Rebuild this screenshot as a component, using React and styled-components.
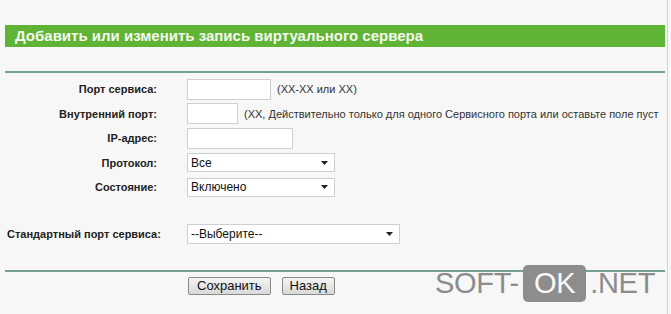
import React from 'react'
import styled, { createGlobalStyle } from 'styled-components'

const Global = createGlobalStyle`
  html, body {
    margin: 0;
    padding: 0;
    background: #f6f7f6;
  }
  body {
    font-family: "Liberation Sans", Arial, sans-serif;
  }
`

const Frame = styled.div`
  position: relative;
  width: 667px;
  height: 314px;
  border-right: 1px solid #d4d4d4;
  overflow: hidden;
`

const Content = styled.div`
  width: 660px;
  margin-left: 5px;
  padding-top: 25px;
  overflow: hidden;
`

const TitleBar = styled.div`
  height: 22px;
  background: #60b435;
  color: #f4f8ee;
  font-weight: bold;
  font-size: 15px;
  line-height: 22px;
  padding-left: 10px;
  white-space: nowrap;
`

const Divider = styled.div`
  height: 2px;
  background: #76a191;
  margin-top: ${props => props.top}px;
`

const Form = styled.div`
  display: grid;
  grid-template-columns: 152px auto;
  column-gap: 30px;
  grid-auto-rows: 24.5px;
  align-items: center;
  margin-top: 4px;
`

const Label = styled.div`
  font-size: 11px;
  font-weight: bold;
  color: #222;
  text-align: ${props => props.align || 'right'};
  padding-left: ${props => props.pad || 0}px;
  white-space: nowrap;
`

const Field = styled.div`
  display: flex;
  align-items: center;
  gap: 6px;
  white-space: nowrap;
`

const Input = styled.div`
  box-sizing: border-box;
  width: ${props => props.w}px;
  height: 21px;
  background: #fff;
  border: 1px solid #cfcfcf;
`

const Hint = styled.span`
  font-size: 11px;
  color: #333;
`

const Select = styled.div`
  box-sizing: border-box;
  width: ${props => props.w}px;
  height: ${props => props.h || 19}px;
  background: #fff;
  border: 1px solid #cfcfcf;
  display: flex;
  align-items: center;
  justify-content: space-between;
  padding: 0 6px 0 3px;
  font-size: 12px;
  color: #111;
`

const Arrow = () => (
  <svg width="7" height="4" viewBox="0 0 7 4">
    <path d="M0 0 H7 L3.5 4 Z" fill="#222" />
  </svg>
)

const StdRow = styled.div`
  display: grid;
  grid-template-columns: 182px auto;
  align-items: center;
  margin-top: 24px;
`

const Buttons = styled.div`
  display: flex;
  gap: 11px;
  padding-left: 183px;
  margin-top: 5px;
`

const Button = styled.div`
  box-sizing: border-box;
  height: 18px;
  padding: 0 ${props => props.px}px;
  border: 1px solid #8a8a8a;
  border-radius: 2px;
  background: linear-gradient(#f4f4f4, #d9d9d9);
  font-size: 13px;
  line-height: 16px;
  color: #111;
`

const Watermark = styled.div`
  position: absolute;
  left: 435px;
  top: 265px;
  display: flex;
  align-items: center;
  gap: 4px;
  font-size: 29px;
  color: #8c8c8c;
  letter-spacing: -0.3px;
`

const Ok = styled.span`
  background: #8d8d8d;
  color: #fafafa;
  border-radius: 5px;
  padding: 2px 11px 2px;
  line-height: 33px;
`

export default function App () {
  return (
    <>
      <Global />
      <Frame>
        <Content>
          <TitleBar>Добавить или изменить запись виртуального сервера</TitleBar>
          <Divider top={24} />
          <Form>
            <Label>Порт сервиса:</Label>
            <Field><Input w={84} /><Hint>(XX-XX или XX)</Hint></Field>
            <Label>Внутренний порт:</Label>
            <Field><Input w={51} /><Hint>(XX, Действительно только для одного Сервисного порта или оставьте поле пуст</Hint></Field>
            <Label>IP-адрес:</Label>
            <Field><Input w={106} /></Field>
            <Label>Протокол:</Label>
            <Field><Select w={148}>Все<Arrow /></Select></Field>
            <Label>Состояние:</Label>
            <Field><Select w={148}>Включено<Arrow /></Select></Field>
          </Form>
          <StdRow>
            <Label align="left" pad={2}>Стандартный порт сервиса:</Label>
            <Select w={213} h={20}>--Выберите--<Arrow /></Select>
          </StdRow>
          <Divider top={26} />
          <Buttons>
            <Button px={8}>Сохранить</Button>
            <Button px={7}>Назад</Button>
          </Buttons>
        </Content>
        <Watermark>SOFT-<Ok>OK</Ok>.NET</Watermark>
      </Frame>
    </>
  )
}
